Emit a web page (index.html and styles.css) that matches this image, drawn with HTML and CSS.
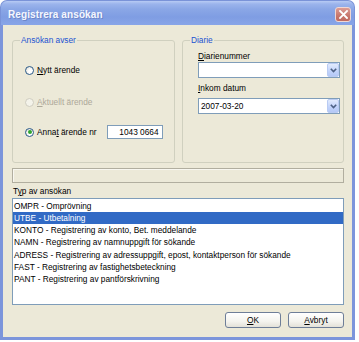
FILE: index.html
```html
<!DOCTYPE html>
<html lang="sv">
<head>
<meta charset="utf-8">
<title>Registrera ansökan</title>
<link rel="stylesheet" href="styles.css">
</head>
<body>
<div class="window">
  <div class="titlebar">
    <span class="title">Registrera ansökan</span>
    <span class="close">
      <svg width="9" height="9" viewBox="0 0 9 9"><path d="M1 1 L8 8 M8 1 L1 8" stroke="#fff" stroke-width="1.8" stroke-linecap="square"/></svg>
    </span>
  </div>
  <div class="client">
    <div class="groups">
      <div class="group group-left">
        <span class="legend">Ansökan avser</span>
        <div class="radio-row row-first">
          <span class="radio"></span>
          <span class="radio-text"><u>N</u>ytt ärende</span>
        </div>
        <div class="radio-row row-second disabled">
          <span class="radio"></span>
          <span class="radio-text"><u>A</u>ktuellt ärende</span>
        </div>
        <div class="radio-row row-third">
          <span class="radio checked"></span>
          <span class="radio-text">Anna<u>t</u> ärende nr</span>
          <span class="textbox">1043 0664</span>
        </div>
      </div>
      <div class="group group-right">
        <span class="legend">Diarie</span>
        <div class="field-label label-first"><u>D</u>iarienummer</div>
        <div class="combo">
          <span class="combo-value"></span>
          <span class="combo-btn"><svg width="7" height="5" viewBox="0 0 7 5"><path d="M0.8 0.8 L3.5 3.6 L6.2 0.8" fill="none" stroke="#4d6185" stroke-width="1.6"/></svg></span>
        </div>
        <div class="field-label label-second"><u>I</u>nkom datum</div>
        <div class="combo">
          <span class="combo-value">2007-03-20</span>
          <span class="combo-btn"><svg width="7" height="5" viewBox="0 0 7 5"><path d="M0.8 0.8 L3.5 3.6 L6.2 0.8" fill="none" stroke="#4d6185" stroke-width="1.6"/></svg></span>
        </div>
      </div>
    </div>
    <div class="statusbar"></div>
    <div class="list-label">T<u>y</u>p av ansökan</div>
    <div class="listbox">
      <div class="item">OMPR - Omprövning</div>
      <div class="item selected">UTBE - Utbetalning</div>
      <div class="item">KONTO - Registrering av konto, Bet. meddelande</div>
      <div class="item">NAMN - Registrering av namnuppgift för sökande</div>
      <div class="item">ADRESS - Registrering av adressuppgift, epost, kontaktperson för sökande</div>
      <div class="item">FAST - Registrering av fastighetsbeteckning</div>
      <div class="item">PANT - Registrering av pantförskrivning</div>
    </div>
    <div class="buttons">
      <button class="btn"><u>O</u>K</button>
      <button class="btn"><u>A</u>vbryt</button>
    </div>
  </div>
</div>
</body>
</html>
```

FILE: styles.css
```css
* { box-sizing: border-box; }

html, body {
  margin: 0;
  padding: 0;
  background: #ffffff;
}

body {
  font-family: "Liberation Sans", Arial, sans-serif;
  font-size: 8.3px;
  color: #000;
  width: 359px;
  height: 342px;
  overflow: hidden;
}

.window {
  width: 355px;
  height: 340px;
  display: flex;
  flex-direction: column;
}

.titlebar {
  height: 25px;
  flex: none;
  display: flex;
  align-items: center;
  justify-content: space-between;
  padding: 2px 3px 0 7px;
  border-radius: 7px 7px 0 0;
  background: linear-gradient(to bottom, #b8cbf4 0px, #9bb4ec 3px, #8ba7e6 8px, #7f9de3 16px, #89a6e8 25px);
  border: 1px solid #7a93d8;
  border-bottom: none;
}

.title {
  color: #f4f7ff;
  font-weight: bold;
  font-size: 10px;
  letter-spacing: 0.1px;
  text-shadow: 1px 1px 0 #6d86c8;
}

.close {
  width: 16px;
  height: 15px;
  border-radius: 3px;
  border: 1px solid #f0d7d3;
  background: linear-gradient(to bottom, #dd9d95, #c7766c 60%, #c06a60);
  display: flex;
  align-items: center;
  justify-content: center;
}

.client {
  flex: 1;
  background: #ece9d8;
  border: 3px solid #7c95db;
  border-top: none;
  padding: 15px 8px 0 9px;
  display: flex;
  flex-direction: column;
}

.groups {
  display: flex;
  gap: 7px;
  height: 123px;
}

.group {
  position: relative;
  border: 1px solid #d0d0bf;
  border-radius: 3px;
}

.group-left {
  width: 163px;
  padding: 22px 0 0 12px;
}

.group-right {
  flex: 1;
  padding: 10px 3px 0 15px;
}

.legend {
  position: absolute;
  top: -5px;
  left: 7px;
  padding: 0 1px;
  background: #ece9d8;
  color: #1b52d1;
  line-height: 9px;
}

.radio-row {
  display: flex;
  align-items: center;
  height: 14px;
}

.row-second { margin-top: 18px; }
.row-third { margin-top: 16px; }

.radio {
  width: 9px;
  height: 9px;
  border-radius: 50%;
  border: 1px solid #2a5a8a;
  background: radial-gradient(circle at 65% 65%, #ffffff 30%, #dcd9cb 100%);
  margin-right: 3px;
  display: flex;
  align-items: center;
  justify-content: center;
  flex: none;
}

.radio.checked::after {
  content: "";
  width: 4px;
  height: 4px;
  border-radius: 50%;
  background: #2fa52f;
}

.disabled .radio {
  border-color: #cfcdc0;
  background: #f4f3ea;
}

.disabled .radio-text {
  color: #aca899;
}

.textbox {
  margin-left: 10px;
  width: 56px;
  height: 14px;
  border: 1px solid #7f9db9;
  background: #fff;
  text-align: right;
  padding-right: 3px;
  line-height: 12px;
}

.field-label {
  line-height: 10px;
}

.label-first { margin-bottom: 1px; }
.label-second { margin-top: 5px; margin-bottom: 5px; }

.combo {
  height: 16px;
  border: 1px solid #7f9db9;
  background: #fff;
  display: flex;
  align-items: center;
}

.combo-value {
  flex: 1;
  padding-left: 2px;
}

.combo-btn {
  width: 12px;
  height: 14px;
  border: 1px solid #b9cbf3;
  border-radius: 2px;
  background: linear-gradient(to bottom, #e2ebfd, #c1d3fb 60%, #b4c8f6);
  display: flex;
  align-items: center;
  justify-content: center;
}

.statusbar {
  margin-top: 5px;
  height: 15px;
  border: 1px solid #b1ae9f;
  box-shadow: inset 1px 1px 0 #f8f7f0;
  background: #ece9d8;
}

.list-label {
  margin-top: 3px;
  line-height: 10px;
  padding-left: 1px;
}

.listbox {
  margin-top: 2px;
  height: 107px;
  border: 1px solid #7f9db9;
  background: #fff;
  padding-top: 0.5px;
}

.item {
  line-height: 12.33px;
  height: 12.33px;
  padding-left: 1px;
  white-space: nowrap;
}

.item.selected {
  background: #316ac5;
  color: #fff;
}

.buttons {
  margin-top: 7px;
  display: flex;
  justify-content: flex-end;
  gap: 7px;
}

.btn {
  width: 56px;
  height: 16px;
  padding: 0;
  font-family: inherit;
  font-size: 8.3px;
  color: #000;
  border: 1px solid #6e7e98;
  border-radius: 3px;
  background: linear-gradient(to bottom, #ffffff, #f4f3ee 60%, #e3e1d8);
}
```
